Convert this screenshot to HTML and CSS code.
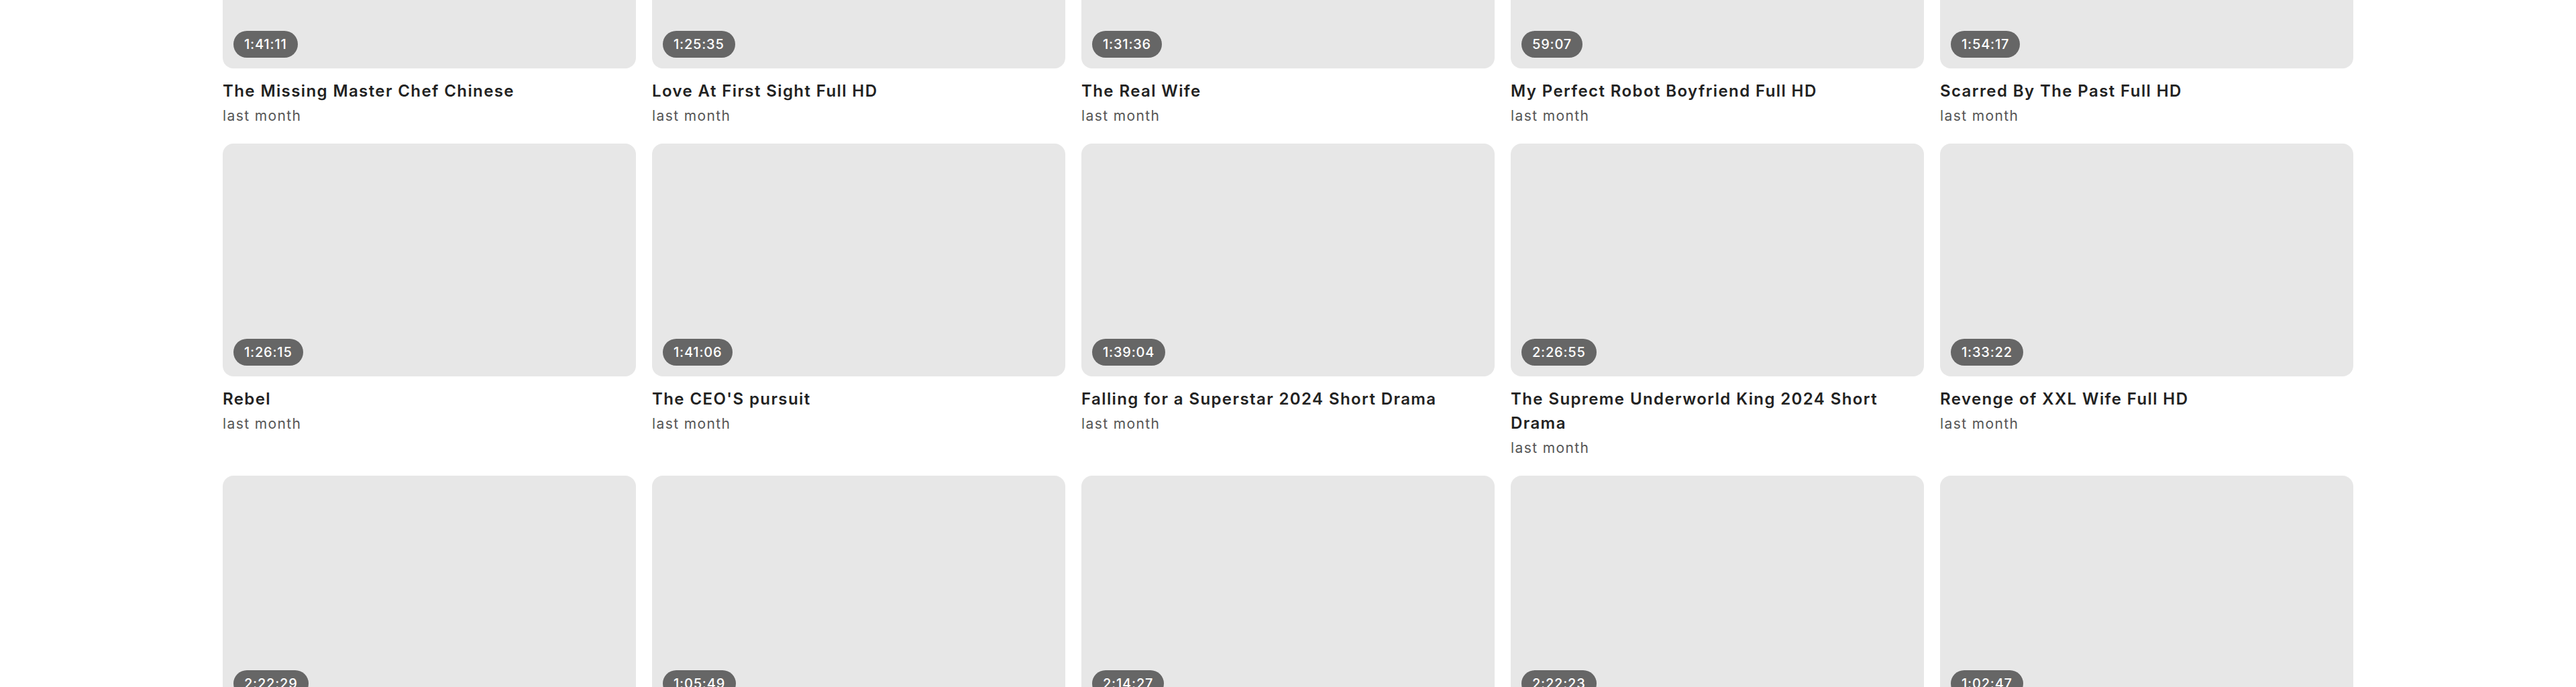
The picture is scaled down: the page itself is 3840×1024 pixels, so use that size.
FILE: index.html
```html
<!DOCTYPE html>
<html lang="en">
<head>
<meta charset="utf-8">
<title>Videos</title>
<link rel="stylesheet" href="styles.css">
</head>
<body>
<main class="page">
  <section class="video-grid">
    <article class="video-card">
      <div class="thumb"><span class="duration">1:41:11</span></div>
      <h3 class="title">The Missing Master Chef Chinese</h3>
      <p class="date">last month</p>
    </article>
    <article class="video-card">
      <div class="thumb"><span class="duration">1:25:35</span></div>
      <h3 class="title">Love At First Sight Full HD</h3>
      <p class="date">last month</p>
    </article>
    <article class="video-card">
      <div class="thumb"><span class="duration">1:31:36</span></div>
      <h3 class="title">The Real Wife</h3>
      <p class="date">last month</p>
    </article>
    <article class="video-card">
      <div class="thumb"><span class="duration">59:07</span></div>
      <h3 class="title">My Perfect Robot Boyfriend Full HD</h3>
      <p class="date">last month</p>
    </article>
    <article class="video-card">
      <div class="thumb"><span class="duration">1:54:17</span></div>
      <h3 class="title">Scarred By The Past Full HD</h3>
      <p class="date">last month</p>
    </article>

    <article class="video-card">
      <div class="thumb"><span class="duration">1:26:15</span></div>
      <h3 class="title">Rebel</h3>
      <p class="date">last month</p>
    </article>
    <article class="video-card">
      <div class="thumb"><span class="duration">1:41:06</span></div>
      <h3 class="title">The CEO'S pursuit</h3>
      <p class="date">last month</p>
    </article>
    <article class="video-card">
      <div class="thumb"><span class="duration">1:39:04</span></div>
      <h3 class="title">Falling for a Superstar 2024 Short Drama</h3>
      <p class="date">last month</p>
    </article>
    <article class="video-card">
      <div class="thumb"><span class="duration">2:26:55</span></div>
      <h3 class="title">The Supreme Underworld King 2024 Short Drama</h3>
      <p class="date">last month</p>
    </article>
    <article class="video-card">
      <div class="thumb"><span class="duration">1:33:22</span></div>
      <h3 class="title">Revenge of XXL Wife Full HD</h3>
      <p class="date">last month</p>
    </article>

    <article class="video-card">
      <div class="thumb"><span class="duration">2:22:29</span></div>
      <h3 class="title">The Hidden Heiress</h3>
      <p class="date">last month</p>
    </article>
    <article class="video-card">
      <div class="thumb"><span class="duration">1:05:49</span></div>
      <h3 class="title">Married to the Billionaire</h3>
      <p class="date">last month</p>
    </article>
    <article class="video-card">
      <div class="thumb"><span class="duration">2:14:27</span></div>
      <h3 class="title">Return of the Queen</h3>
      <p class="date">last month</p>
    </article>
    <article class="video-card">
      <div class="thumb"><span class="duration">2:22:23</span></div>
      <h3 class="title">Love After Divorce</h3>
      <p class="date">last month</p>
    </article>
    <article class="video-card">
      <div class="thumb"><span class="duration">1:02:47</span></div>
      <h3 class="title">The Secret Bodyguard</h3>
      <p class="date">last month</p>
    </article>
  </section>
</main>
</body>
</html>
```

FILE: styles.css
```css
html, body {
  margin: 0;
  padding: 0;
  background: #ffffff;
}

body {
  font-family: "Inter", "Liberation Sans", sans-serif;
  color: #222222;
}

.page {
  padding: 0 332px;
  /* page is scrolled: first row begins above the viewport */
  margin-top: -244.5px;
}

.video-grid {
  display: grid;
  grid-template-columns: repeat(5, 1fr);
  column-gap: 24px;
  row-gap: 26px;
  align-items: start;
}

.video-card {
  display: flex;
  flex-direction: column;
  min-width: 0;
}

.thumb {
  position: relative;
  aspect-ratio: 16 / 9;
  background: #e7e7e7;
  border-radius: 16px;
}

.duration {
  position: absolute;
  left: 16px;
  bottom: 16px;
  height: 40px;
  padding: 0 16px;
  border-radius: 20px;
  background: #666666;
  color: #ffffff;
  font-size: 20px;
  font-weight: 500;
  letter-spacing: 0.8px;
  line-height: 40px;
  box-sizing: border-box;
}

.title {
  margin: 16px 0 0;
  font-size: 24px;
  line-height: 36px;
  font-weight: 600;
  letter-spacing: 1.4px;
  color: #222222;
}

.date {
  margin: 4px 0 0;
  font-size: 21px;
  line-height: 30px;
  font-weight: 400;
  letter-spacing: 1.4px;
  color: #555555;
}
```
